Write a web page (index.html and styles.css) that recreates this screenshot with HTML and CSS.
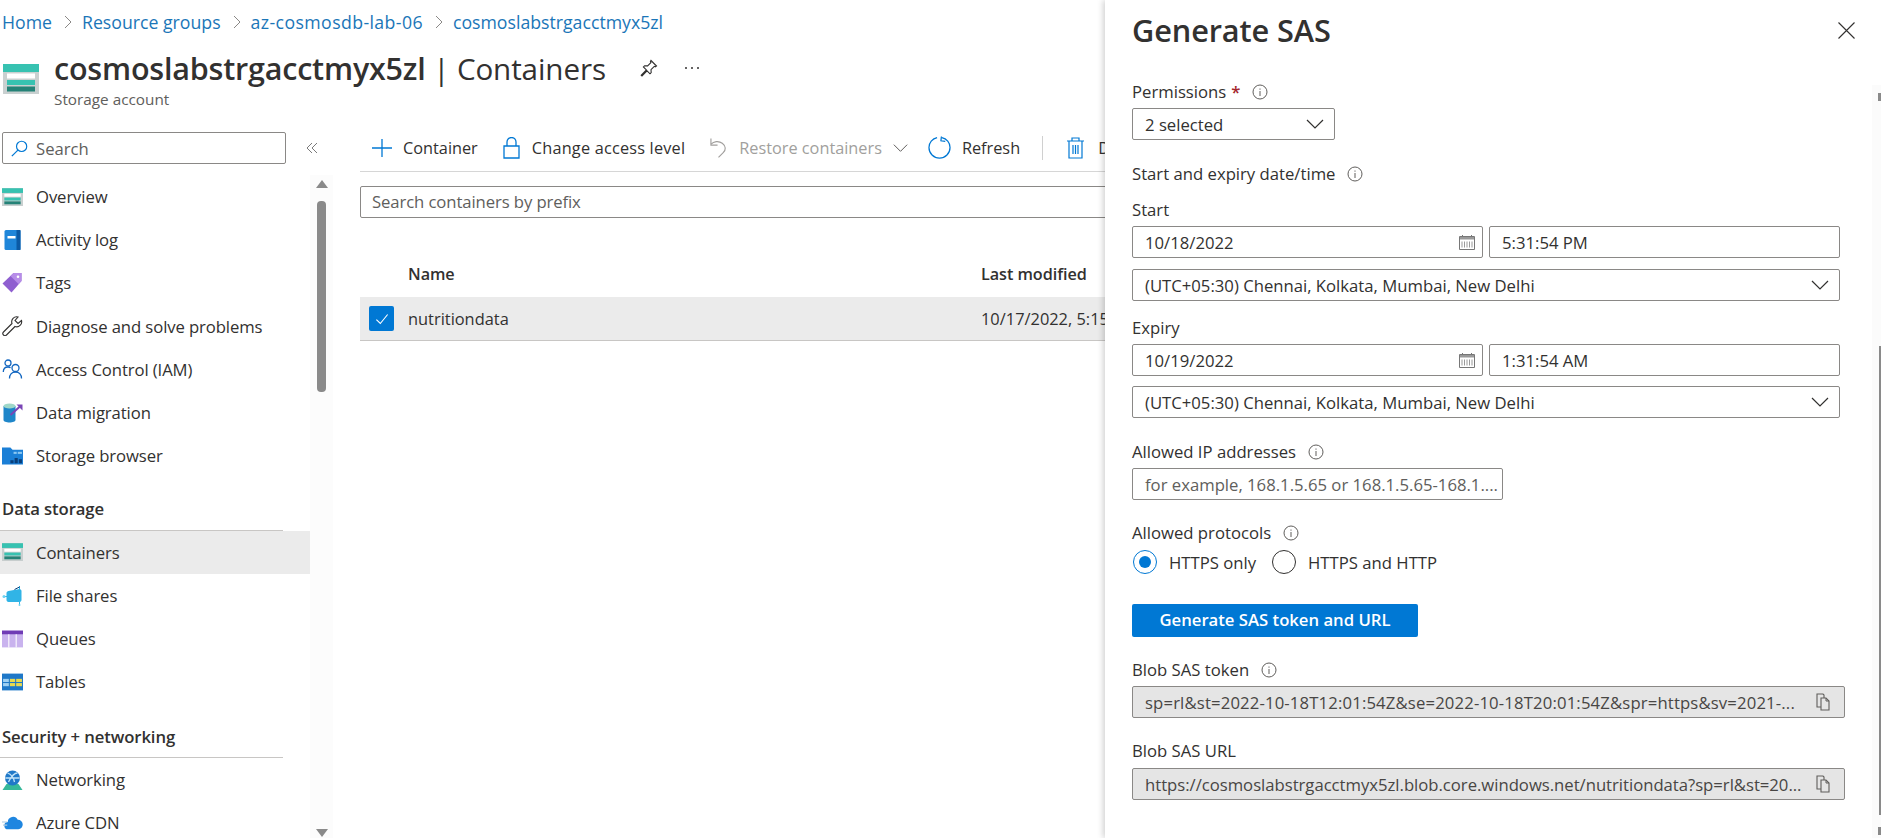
FILE: index.html
```html
<!DOCTYPE html>
<html lang="en">
<head>
<meta charset="utf-8">
<title>Generate SAS</title>
<link rel="stylesheet" href="styles.css">
</head>
<body>
<svg class="sprite" xmlns="http://www.w3.org/2000/svg">
  <symbol id="storage" viewBox="0 0 36 30">
    <rect x="0" y="0" width="36" height="30" rx="1" fill="#b3bcbc"/>
    <rect x="0" y="8" width="36" height="22" fill="#c9d0d0"/>
    <rect x="0" y="0" width="36" height="8" fill="#37c2b1"/>
    <rect x="4" y="9.500" width="28" height="5" fill="#fff"/>
    <rect x="4" y="16" width="28" height="5" fill="#37c2b1"/>
    <rect x="4" y="22.500" width="28" height="5" fill="#258277"/>
  </symbol>
  <symbol id="info" viewBox="0 0 16 16">
    <circle cx="8" cy="8" r="7" fill="none" stroke="#605e5c" stroke-width="1"/>
    <rect x="7.500" y="7" width="1" height="5" fill="#605e5c"/>
    <rect x="7.500" y="4.500" width="1" height="1.200" fill="#605e5c"/>
  </symbol>
  <symbol id="chev" viewBox="0 0 18 12">
    <path d="M1 2l8 8 8-8" fill="none" stroke="#323130" stroke-width="1.200"/>
  </symbol>
  <symbol id="cal" viewBox="0 0 16 16">
    <path d="M.5 2.500h15v13H.5z" fill="none" stroke="#777" stroke-width="1"/>
    <path d="M1 3h14v2.500H1z" fill="#999"/>
    <path d="M3.500 1v2M12.500 1v2" stroke="#777" stroke-width="1"/>
    <path d="M3 7.500v6M5.500 7.500v6M8 7.500v6M10.500 7.500v6M13 7.500v6" stroke="#999" stroke-width="1"/>
  </symbol>
  <symbol id="copy" viewBox="0 0 14 18">
    <path d="M1 1h6l1 1v12H1z" fill="none" stroke="#605e5c" stroke-width="1.100"/>
    <path d="M5 5h5l3 3v9H5z" fill="#e5e5e5" stroke="#605e5c" stroke-width="1.100"/>
    <path d="M10 5v3h3" fill="none" stroke="#605e5c" stroke-width="1"/>
  </symbol>
</svg>

<div class="page">
  <nav class="crumbs">
    <a class="crumb">Home</a><svg class="sep" viewBox="0 0 8 14"><path d="M1 1l6 6-6 6" fill="none" stroke="#8a8886" stroke-width="1"/></svg>
    <a class="crumb">Resource groups</a><svg class="sep" viewBox="0 0 8 14"><path d="M1 1l6 6-6 6" fill="none" stroke="#8a8886" stroke-width="1"/></svg>
    <a class="crumb crumb-rg">az-cosmosdb-lab-06</a><svg class="sep" viewBox="0 0 8 14"><path d="M1 1l6 6-6 6" fill="none" stroke="#8a8886" stroke-width="1"/></svg>
    <a class="crumb">cosmoslabstrgacctmyx5zl</a>
  </nav>

  <header class="head">
    <svg class="head-icon"><use href="#storage"/></svg>
    <div class="head-text">
      <div class="head-title">
        <h1 class="title-main">cosmoslabstrgacctmyx5zl</h1>
        <span class="title-sub">&nbsp;| Containers</span>
        <svg class="pin" viewBox="0 0 18 18"><path d="M11 1.500l5.500 5.500-1.200.8-1-.5-3.300 3.300.2 3-1.200 1.200-3-3L2 17l-.8-.8 5.200-5.300-3-3L4.600 6.700l3 .2 3.300-3.300-.5-1z" fill="none" stroke="#323130" stroke-width="1.100"/></svg>
        <svg class="more" viewBox="0 0 16 4"><circle cx="2" cy="2" r="1" fill="#323130"/><circle cx="8" cy="2" r="1" fill="#323130"/><circle cx="14" cy="2" r="1" fill="#323130"/></svg>
      </div>
      <div class="head-caption">Storage account</div>
    </div>
  </header>

  <div class="main">
    <aside class="side">
      <div class="side-search-row">
        <div class="side-search">
          <svg class="side-search-icon" viewBox="0 0 16 16"><circle cx="10" cy="6" r="4.800" fill="none" stroke="#0078d4" stroke-width="1.100"/><path d="M6.500 9.500L.8 15.200" stroke="#0078d4" stroke-width="1.200"/></svg>
          <span>Search</span>
        </div>
        <svg class="collapse" viewBox="0 0 12 12"><path d="M6 1L1 6l5 5M11 1L6 6l5 5" fill="none" stroke="#7a7a7a" stroke-width="1"/></svg>
      </div>
      <div class="side-body">
        <ul class="nav">
          <li class="nav-item"><svg class="nav-icon"><use href="#storage"/></svg>Overview</li>
          <li class="nav-item"><svg class="nav-icon" viewBox="0 0 20 20"><rect x="2" y="0" width="16" height="20" rx="1.500" fill="#1f86d9"/><rect x="14" y="0" width="4" height="20" fill="#0b5aa5"/><rect x="5" y="6" width="8" height="2.500" fill="#fff"/></svg>Activity log</li>
          <li class="nav-item"><svg class="nav-icon" viewBox="0 0 20 20"><path d="M11 0h8v8L9 19.500 0 10.500z" fill="#8f5fd0"/><path d="M11 0h8v8l-3 3-8-8z" fill="#b78de8"/><circle cx="15.500" cy="3.800" r="1.300" fill="#fff"/></svg>Tags</li>
          <li class="nav-item"><svg class="nav-icon" viewBox="0 0 20 20"><path d="M19 4.500l-3.500 3-3-3 3-3.500a5 5 0 0 0-6 6.500L1 16a2 2 0 0 0 3 3l8.500-8.500a5 5 0 0 0 6.500-6z" fill="none" stroke="#323130" stroke-width="1.100"/></svg>Diagnose and solve problems</li>
          <li class="nav-item"><svg class="nav-icon" viewBox="0 0 20 20"><g fill="none" stroke="#1266c0" stroke-width="1.300"><circle cx="5.500" cy="4" r="3"/><path d="M.8 13c0-3 2-5 4.700-5 1 0 1.800.2 2.500.7"/><circle cx="13" cy="9" r="3.500"/><path d="M7 19.500c0-4 2.500-6.500 6-6.500s6 2.500 6 6.500"/></g></svg>Access Control (IAM)</li>
          <li class="nav-item"><svg class="nav-icon" viewBox="0 0 20 20"><path d="M1 3v14c0 1.500 2.700 2.500 6 2.500s6-1 6-2.500V3z" fill="#1f86c9"/><ellipse cx="7" cy="3" rx="6" ry="2.500" fill="#9fd8c9"/><path d="M8 12L18 3" stroke="#7a45b5" stroke-width="2"/><path d="M14 1.500h6v6z" fill="#7a45b5"/></svg>Data migration</li>
          <li class="nav-item"><svg class="nav-icon" viewBox="0 0 20 16"><path d="M0 0h8l2 2h10v14H0z" fill="#1b7fd6"/><rect x="11" y="4" width="3" height="2" fill="#8cc8f2"/><rect x="15" y="4" width="4" height="2" fill="#8cc8f2"/><path d="M8 12h3v3H8zM12 10h3v5h-3zM16 11h3v4h-3z" fill="#0a3f7a"/></svg>Storage browser</li>
          <li class="nav-head">Data storage</li>
          <li class="nav-item nav-active"><svg class="nav-icon"><use href="#storage"/></svg>Containers</li>
          <li class="nav-item"><svg class="nav-icon" viewBox="0 0 20 20"><path d="M4 7c0-1 1-2 2-2l11-2c1 0 2 1 2 2v9c0 1-1 2-2 2H6c-1 0-2-1-2-2z" fill="#31b4e6"/><path d="M1 10.500h4M17 0v4M17 16v3" stroke="#31b4e6" stroke-width="1"/><circle cx="1.500" cy="10.500" r="1.500" fill="#6fd3f2"/><circle cx="17" cy="19" r="1" fill="#6fd3f2"/><path d="M12 3.500l5-2.500" stroke="#0a3f7a" stroke-width="1"/></svg>File shares</li>
          <li class="nav-item"><svg class="nav-icon" viewBox="0 0 20 16"><rect width="20" height="16" fill="#c9b3ee"/><rect width="20" height="3.500" fill="#6f3bb5"/><path d="M6.500 3.500V16M13.500 3.500V16" stroke="#fff" stroke-width="1"/></svg>Queues</li>
          <li class="nav-item"><svg class="nav-icon" viewBox="0 0 20 16"><rect width="20" height="16" fill="#1f78c8"/><rect x="1" y="5" width="5.500" height="3" fill="#9fd0f2"/><rect x="7.500" y="5" width="5" height="3" fill="#e8d94f"/><rect x="13.500" y="5" width="5.500" height="3" fill="#e8d94f"/><rect x="1" y="9" width="5.500" height="3" fill="#9fd0f2"/><rect x="7.500" y="9" width="5" height="3" fill="#e8d94f"/><rect x="13.500" y="9" width="5.500" height="3" fill="#e8d94f"/></svg>Tables</li>
          <li class="nav-head nav-head-2">Security + networking</li>
          <li class="nav-item"><svg class="nav-icon" viewBox="0 0 20 20"><path d="M0 20l4-6h12l4 6z" fill="#35b89a"/><circle cx="10" cy="8" r="7.500" fill="#1f78c8"/><path d="M5 3c3 1 6 4 7 9M15 3c-3 0-6 3-9 9M2.800 8h14.400" fill="none" stroke="#bfe1f7" stroke-width="1.300"/></svg>Networking</li>
          <li class="nav-item"><svg class="nav-icon" viewBox="0 0 20 14"><path d="M6 13a3.500 3.500 0 0 1-.5-7A5 5 0 0 1 15 4a4.500 4.500 0 0 1 .5 9z" fill="#1f86e0"/><path d="M0 6h5M1 9h4" stroke="#a8c8e0" stroke-width="1"/></svg>Azure CDN</li>
        </ul>
        <div class="side-scroll">
          <span class="arrow-up"></span>
          <span class="side-thumb"></span>
          <span class="arrow-down"></span>
        </div>
      </div>
    </aside>

    <section class="content">
      <div class="toolbar">
        <span class="tool"><svg class="t-plus" viewBox="0 0 20 18"><path d="M10 0v18M0 9h20" stroke="#0078d4" stroke-width="1.300"/></svg>Container</span>
        <span class="tool tool-wide"><svg class="t-lock" viewBox="0 0 17 22"><path d="M1 9h15v12H1z" fill="none" stroke="#0078d4" stroke-width="1.300"/><path d="M4 9V5a4.500 4.500 0 0 1 9 0v4" fill="none" stroke="#0078d4" stroke-width="1.300"/></svg>Change access level</span>
        <span class="tool tool-off"><svg class="t-undo" viewBox="0 0 18 22"><path d="M1 1v7h7" fill="none" stroke="#a19f9d" stroke-width="1.200"/><path d="M1 7c3-3 8-4 12-1 4 3 4 7 1 10l-5 5" fill="none" stroke="#a19f9d" stroke-width="1.200"/></svg>Restore containers<svg class="t-chev" viewBox="0 0 18 12"><path d="M1 2l8 8 8-8" fill="none" stroke="#605e5c" stroke-width="1.200"/></svg></span>
        <span class="tool"><svg class="t-refresh" viewBox="0 0 24 24"><path d="M9.500 1.700C4.500 2.800 1 7 1 12a11 11 0 0 0 22 0c0-5-3.500-9.200-8.500-10.300" fill="none" stroke="#0078d4" stroke-width="1.300"/><path d="M14 .5l-.5 4.500 4.500 .5" fill="none" stroke="#0078d4" stroke-width="1.300"/></svg>Refresh</span>
        <span class="tool-sep"></span>
        <span class="tool"><svg class="t-trash" viewBox="0 0 17 22"><path d="M0 4h17M5 4V1h7v3M2 4v17h13V4M6 8v9M8.500 8v9M11 8v9" fill="none" stroke="#0078d4" stroke-width="1.200"/></svg>Delete</span>
      </div>
      <div class="filter">Search containers by prefix</div>
      <div class="thead"><span class="col-name">Name</span><span class="col-mod">Last modified</span></div>
      <div class="trow">
        <span class="check"><svg viewBox="0 0 16 16"><path d="M3 8.500l3.500 3.500L13 4" fill="none" stroke="#fff" stroke-width="1"/></svg></span>
        <span class="col-name-row">nutritiondata</span><span class="col-mod">10/17/2022, 5:15</span>
      </div>
    </section>
  </div>

  <aside class="panel">
    <h2 class="panel-title">Generate SAS</h2>
    <svg class="close" viewBox="0 0 17 17"><path d="M.5.500l16 16M16.500.500l-16 16" stroke="#323130" stroke-width="1.100"/></svg>

    <div class="lbl lbl-first">Permissions<span class="req">*</span><svg class="info"><use href="#info"/></svg></div>
    <div class="box box-perm"><span class="val">2 selected</span><svg class="chev"><use href="#chev"/></svg></div>

    <div class="lbl sec">Start and expiry date/time<svg class="info"><use href="#info"/></svg></div>
    <div class="lbl sub">Start</div>
    <div class="dt"><div class="box box-half"><span class="val">10/18/2022</span><svg class="cal"><use href="#cal"/></svg></div><div class="box box-half"><span class="val">5:31:54 PM</span></div></div>
    <div class="box box-tz"><span class="val">(UTC+05:30) Chennai, Kolkata, Mumbai, New Delhi</span><svg class="chev"><use href="#chev"/></svg></div>

    <div class="lbl sub2">Expiry</div>
    <div class="dt"><div class="box box-half"><span class="val">10/19/2022</span><svg class="cal"><use href="#cal"/></svg></div><div class="box box-half"><span class="val">1:31:54 AM</span></div></div>
    <div class="box box-tz box-tz-2"><span class="val">(UTC+05:30) Chennai, Kolkata, Mumbai, New Delhi</span><svg class="chev"><use href="#chev"/></svg></div>

    <div class="lbl sec">Allowed IP addresses<svg class="info"><use href="#info"/></svg></div>
    <div class="box box-ip"><span class="val val-ph">for example, 168.1.5.65 or 168.1.5.65-168.1....</span></div>

    <div class="lbl sec2">Allowed protocols<svg class="info"><use href="#info"/></svg></div>
    <div class="radios">
      <span class="radio radio-on"></span><span class="radio-text">HTTPS only</span>
      <span class="radio"></span><span class="radio-text">HTTPS and HTTP</span>
    </div>

    <div class="gen-btn">Generate SAS token and URL</div>

    <div class="lbl sec2">Blob SAS token<svg class="info"><use href="#info"/></svg></div>
    <div class="box box-out"><span class="val val-out val-token">sp=rl&amp;st=2022-10-18T12:01:54Z&amp;se=2022-10-18T20:01:54Z&amp;spr=https&amp;sv=2021-...</span><svg class="copy"><use href="#copy"/></svg></div>
    <div class="lbl sec2">Blob SAS URL</div>
    <div class="box box-out box-out-2"><span class="val val-out val-url">https://cosmoslabstrgacctmyx5zl.blob.core.windows.net/nutritiondata?sp=rl&amp;st=20...</span><svg class="copy"><use href="#copy"/></svg></div>

    <div class="panel-scroll"><span class="arrow-up-s"></span><span class="panel-thumb"></span><span class="arrow-down-s"></span></div>
  </aside>
</div>
</body>
</html>
```
FILE: styles.css
```css
* { box-sizing: border-box; }
html, body { margin: 0; padding: 0; }
body {
  font-family: "Open Sans", "Noto Sans", "Liberation Sans", sans-serif;
  font-size: 16.700px;
  color: #323130;
  background: #fff;
}
.sprite { display: none; }
.page {
  position: relative;
  width: 1881px;
  height: 838px;
  overflow: hidden;
}

/* breadcrumb */
.crumbs {
  height: 44px;
  padding-left: 2px;
  display: flex;
  align-items: center;
  font-size: 17.700px;
  white-space: nowrap;
}
.crumb { color: #1b76b8; }
.crumb-rg { letter-spacing: 0.4px; }
.sep { width: 8px; height: 14px; margin: 0 10px 0 12px; }

/* header */
.head {
  height: 88px;
  display: flex;
  padding-left: 3px;
}
.head-icon { width: 36px; height: 30px; margin-top: 20px; flex: none; }
.head-text { margin-left: 15px; }
.head-title { display: flex; align-items: center; height: 48px; white-space: nowrap; }
.title-main { margin: 0; font-size: 30.500px; font-weight: 600; letter-spacing: -0.2px; color: #323130; }
.title-sub { font-size: 29.600px; letter-spacing: -0.1px; }
.pin { width: 18px; height: 18px; margin-left: 34px; flex: none; }
.more { width: 16px; height: 4px; margin-left: 26px; flex: none; }
.head-caption { font-size: 15.300px; color: #605e5c; margin-top: -3px; }

/* layout */
.main { display: flex; height: 706px; }
.side { width: 360px; flex: none; }
.side-search-row { display: flex; align-items: center; height: 32px; padding-left: 2px; }
.side-search {
  width: 284px;
  height: 32px;
  border: 1px solid #8a8886;
  border-radius: 2px;
  display: flex;
  align-items: center;
  padding-left: 8px;
  color: #605e5c;
}
.side-search-icon { width: 17px; height: 17px; margin-right: 8px; }
.collapse { width: 12px; height: 12px; margin-left: 20px; }

.side-body { display: flex; margin-top: 11px; height: 663px; }
.nav { list-style: none; margin: 0; padding: 0; width: 310px; flex: none; }
.nav-item {
  height: 43.200px;
  display: flex;
  align-items: center;
  letter-spacing: -0.1px;
  white-space: nowrap;
}
.nav-icon { width: 21px; height: 20px; margin-left: 2px; margin-right: 13px; flex: none; }
.nav-active { background: #ebebeb; }
.nav-head {
  height: 53.500px;
  padding: 20px 0 0 2px;
  margin-right: 27px;
  line-height: 24px;
  font-weight: 600;
  letter-spacing: -0.1px;
  border-bottom: 1px solid #c8c6c4;
}
.nav-head-2 { margin-top: 1px; }
.side-scroll {
  width: 23px;
  background: #fcfcfc;
  display: flex;
  flex-direction: column;
  align-items: center;
}
.arrow-up {
  margin-top: 5px;
  border: solid transparent;
  border-width: 0 6px 8px;
  border-bottom-color: #8a8a8a;
}
.side-thumb {
  width: 9px;
  height: 191px;
  margin-top: 13px;
  background: #8a8a8a;
  border-radius: 4px;
}
.arrow-down {
  margin-top: auto;
  margin-bottom: 1px;
  border: solid transparent;
  border-width: 8px 6px 0;
  border-top-color: #8a8a8a;
}

/* content */
.content { width: 745px; flex: none; overflow: hidden; }
.toolbar {
  height: 40px;
  display: flex;
  align-items: center;
  border-bottom: 1px solid #d6d6d6;
  white-space: nowrap;
  padding-left: 12px;
  padding-bottom: 8px;
  font-size: 16.300px;
}
.tool { display: inline-flex; align-items: center; margin-right: 25px; flex: none; }
.tool-wide { letter-spacing: 0.2px; }
.tool-off { color: #a19f9d; margin-right: 20px; }
.t-plus { width: 20px; height: 18px; margin-right: 11px; }
.t-lock { width: 17px; height: 22px; margin-right: 12px; }
.t-undo { width: 17px; height: 22px; margin-right: 12px; }
.t-chev { width: 15px; height: 10px; margin-left: 11px; }
.t-refresh { width: 23px; height: 23px; margin-right: 11px; }
.t-trash { width: 17px; height: 22px; margin-right: 14px; }
.tool-sep { width: 1px; height: 24px; background: #d0d0d0; margin-right: 24px; margin-left: -3px; flex: none; }
.filter {
  margin-top: 14px;
  width: 800px;
  height: 32px;
  border: 1px solid #8a8886;
  border-radius: 2px;
  line-height: 30px;
  padding-left: 11px;
  color: #605e5c;
  letter-spacing: -0.1px;
}
.thead {
  display: grid;
  grid-template-columns: 573px auto;
  height: 79px;
  align-items: end;
  padding: 0 0 12px 48px;
  font-weight: 600;
  letter-spacing: -0.05px;
  font-size: 16.200px;
}
.trow {
  height: 44px;
  background: #ebebeb;
  border-bottom: 1px solid #c8c6c4;
  display: flex;
  align-items: center;
  white-space: nowrap;
  font-size: 16.400px;
}
.check {
  width: 25px;
  height: 25px;
  margin-left: 9px;
  border-radius: 2px;
  background: #0078d4;
  display: flex;
  align-items: center;
  justify-content: center;
  flex: none;
}
.check svg { width: 18px; height: 18px; }
.col-name-row { margin-left: 14px; width: 573px; flex: none; }

/* panel */
.panel {
  position: absolute;
  left: 1105px;
  top: 0;
  width: 776px;
  height: 838px;
  background: #fff;
  box-shadow: -2px 0 6px rgba(0, 0, 0, 0.18);
  padding-left: 27px;
}
.panel-title {
  margin: 0;
  height: 60px;
  line-height: 60px;
  font-size: 30.700px;
  font-weight: 600;
  letter-spacing: -0.1px;
  color: #323130;
}
.close { position: absolute; left: 733px; top: 22px; width: 17px; height: 17px; }
.lbl { height: 24px; line-height: 24px; display: flex; align-items: center; white-space: pre; font-size: 16.700px; }
.lbl-first { margin-top: 20px; }
.req { color: #a4262c; margin-left: 5px; font-weight: 600; }
.info { width: 16px; height: 16px; margin-left: 12px; }
.sec { margin-top: 22px; }
.sec2 { margin-top: 21px; }
.sub { margin-top: 12px; }
.sub2 { margin-top: 15px; }
.box {
  margin-top: 4px;
  height: 32px;
  border: 1px solid #8a8886;
  border-radius: 2px;
  display: flex;
  align-items: center;
  padding: 0 12px;
  background: #fff;
  white-space: nowrap;
}
.val { flex: 1; color: #323130; font-size: 16.700px; }
.val-ph { color: #605e5c; }
.box-perm { width: 203px; }
.dt { display: flex; gap: 6px; margin-top: 4px; }
.dt .box { margin-top: 0; }
.box-half { width: 351px; }
.box-tz { width: 708px; margin-top: 11px; }
.box-tz-2 { margin-top: 10px; }
.box-ip { width: 371px; }
.chev { width: 18px; height: 12px; flex: none; margin-right: -2px; }
.cal { width: 16px; height: 16px; flex: none; margin-right: -5px; }
.radios { display: flex; align-items: center; height: 24px; margin-top: 5px; }
.radio {
  width: 24px;
  height: 24px;
  border: 1px solid #323130;
  border-radius: 50%;
  display: flex;
  flex: none;
  margin-left: 1px;
}
.radio-on { border-color: #0078d4; }
.radio-on::after {
  content: "";
  width: 12px;
  height: 12px;
  margin: auto;
  border-radius: 50%;
  background: #0078d4;
}
.radio-text { margin-left: 12px; margin-right: 15px; }
.gen-btn {
  margin-top: 30px;
  width: 286px;
  height: 33px;
  background: #0078d4;
  border-radius: 2px;
  color: #fff;
  font-weight: 600;
  text-align: center;
  line-height: 32px;
}
.box-out { width: 713px; background: #e5e5e5; }
.box-out-2 { margin-top: 5px; }
.val-out { color: #484644; overflow: hidden; }
.val-token { letter-spacing: 0.15px; }
.val-url { letter-spacing: -0.02px; }
.copy { width: 14px; height: 18px; flex: none; margin-right: 2px; margin-left: 4px; }
.panel-scroll {
  position: absolute;
  left: 767px;
  top: 85px;
  width: 9px;
  height: 753px;
  background: #fbfbfb;
  display: flex;
  flex-direction: column;
  align-items: flex-end;
}
.arrow-up-s, .arrow-down-s {
  width: 3px;
  height: 8px;
  background: #8a8a8a;
}
.arrow-up-s { margin-top: 8px; }
.panel-thumb { width: 2px; height: 469px; margin-top: 245px; background: #8a8a8a; }
.arrow-down-s { margin-top: auto; margin-bottom: 3px; }
```
